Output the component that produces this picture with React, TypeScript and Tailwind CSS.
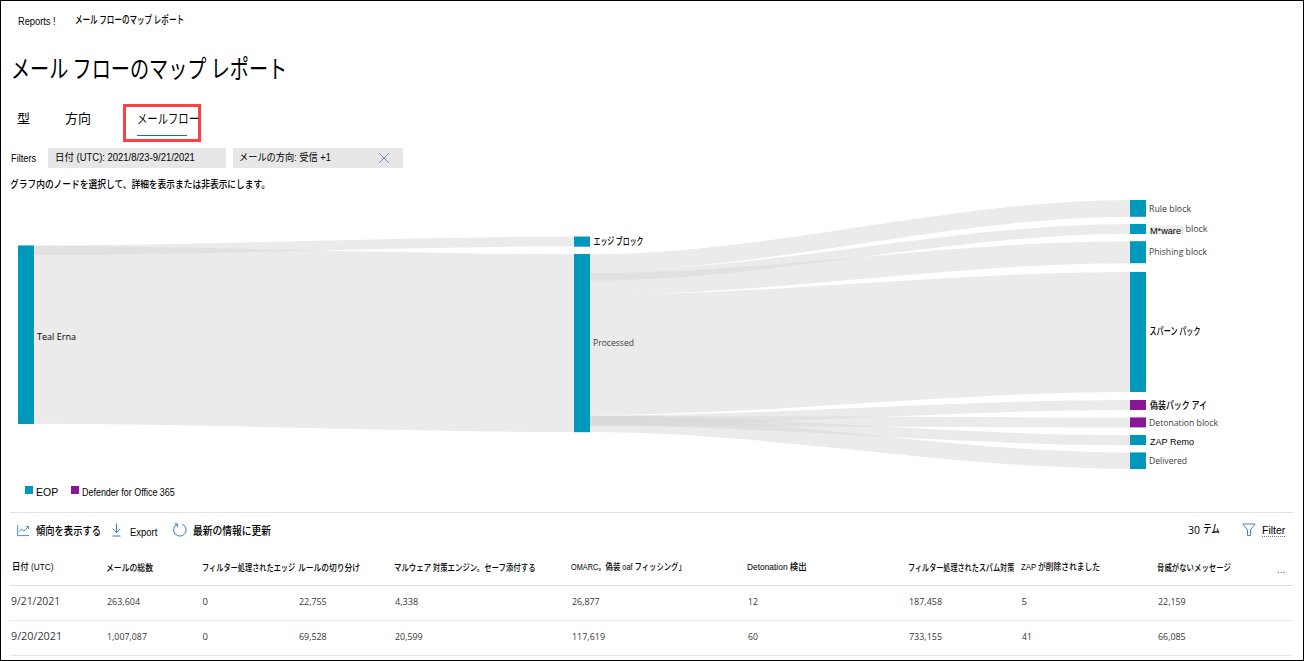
import { useLayoutEffect, useRef, useState } from "react";
import type { ReactNode } from "react";

const JP = "font-['Noto_Sans_CJK_JP',sans-serif]";
const ARIAL = "font-['Liberation_Sans','Noto_Sans_CJK_JP',sans-serif]";
const UI = "font-['Open_Sans','Noto_Sans_CJK_JP',sans-serif]";

/** Single line of text condensed or widened to a fixed width. */
function FitText({ w, className = "", children }: { w: number; className?: string; children: ReactNode }) {
  const ref = useRef<HTMLSpanElement>(null);
  const [scale, setScale] = useState(1);
  useLayoutEffect(() => {
    if (ref.current) setScale(w / ref.current.offsetWidth);
  }, [w]);
  return (
    <span className={`block shrink-0 whitespace-nowrap ${className}`} style={{ width: w }}>
      <span ref={ref} className="inline-block origin-left" style={{ transform: `scaleX(${scale})` }}>
        {children}
      </span>
    </span>
  );
}

type Link = { x0: number; x1: number; s: number; t: number; h: number };
const links: Link[] = [
  { x0: 34, x1: 574, s: 245.5, t: 236.7, h: 9.8 },
  { x0: 34, x1: 574, s: 246, t: 254.2, h: 177.8 },
  { x0: 590, x1: 1130, s: 254.2, t: 200, h: 16.8 },
  { x0: 590, x1: 1130, s: 270.8, t: 224, h: 9.8 },
  { x0: 590, x1: 1130, s: 273, t: 241.2, h: 22 },
  { x0: 590, x1: 1130, s: 295, t: 272, h: 120 },
  { x0: 590, x1: 1130, s: 415.7, t: 400, h: 10 },
  { x0: 590, x1: 1130, s: 415.7, t: 417.5, h: 10 },
  { x0: 590, x1: 1130, s: 415.7, t: 435.2, h: 10 },
  { x0: 590, x1: 1130, s: 415.7, t: 452.4, h: 16.4 },
];

const ribbon = ({ x0, x1, s, t, h }: Link) => {
  const a = x0 + (x1 - x0) / 3;
  const b = x1 - (x1 - x0) / 3;
  return `M${x0} ${s}C${a} ${s} ${b} ${t} ${x1} ${t}V${t + h}C${b} ${t + h} ${a} ${s + h} ${x0} ${s + h}Z`;
};

const TEAL = "#0099bc";
const PURPLE = "#881798";
const nodes = [
  { x: 18, y: 245.4, h: 178.6, c: TEAL },
  { x: 574, y: 236.5, h: 10.2, c: TEAL },
  { x: 574, y: 254, h: 178.2, c: TEAL },
  { x: 1130, y: 200, h: 16.8, c: TEAL },
  { x: 1130, y: 224, h: 10, c: TEAL },
  { x: 1130, y: 241.2, h: 22, c: TEAL },
  { x: 1130, y: 272, h: 120, c: TEAL },
  { x: 1130, y: 400, h: 10, c: PURPLE },
  { x: 1130, y: 417.4, h: 10, c: PURPLE },
  { x: 1130, y: 435, h: 10, c: TEAL },
  { x: 1130, y: 452.4, h: 16.6, c: TEAL },
];

const gray = `${UI} text-[9.5px] fill-[#3c3c3c]`;
const jp = `${JP} text-[10.5px] font-medium fill-black`;
const arial = `${ARIAL} text-[9.5px] fill-black`;
const labels = [
  { x: 37, y: 340, w: 39, t: "Teal Erna", k: `${UI} text-[9.5px] fill-black` },
  { x: 593.5, y: 245, w: 50, t: "エッジ ブロック", k: jp },
  { x: 593, y: 346, w: 41, t: "Processed", k: gray },
  { x: 1149, y: 212, w: 42, t: "Rule block", k: gray },
  { x: 1150, y: 234, w: 31, t: "M*ware", k: arial },
  { x: 1185.5, y: 232, w: 22, t: "block", k: gray },
  { x: 1149, y: 255, w: 58, t: "Phishing block", k: gray },
  { x: 1149.5, y: 334.5, w: 51, t: "スパーン パック", k: jp },
  { x: 1150, y: 408.5, w: 57, t: "偽装パック アイ", k: jp },
  { x: 1149, y: 426, w: 69, t: "Detonation block", k: gray },
  { x: 1150, y: 445, w: 44, t: "ZAP Remo", k: arial },
  { x: 1149, y: 464, w: 38, t: "Delivered", k: gray },
];

function Sankey() {
  return (
    <svg className="block h-[280px] w-[1302px]" viewBox="1 195 1302 280">
      {links.map((l, i) => (
        <path key={i} d={ribbon(l)} fill="#d7d7d7" fillOpacity={0.5} />
      ))}
      {nodes.map((n, i) => (
        <rect key={i} x={n.x} y={n.y} width={16} height={n.h} fill={n.c} />
      ))}
      <rect x={1149} y={225.5} width={34} height={9} fill="#ececec" />
      {labels.map((l) => (
        <text key={l.t + l.y} x={l.x} y={l.y} textLength={l.w} lengthAdjust="spacingAndGlyphs" className={l.k}>
          {l.t}
        </text>
      ))}
    </svg>
  );
}

const COLS = "grid grid-cols-[94px_96px_96px_96px_177px_176px_161px_113px_136px_120px_1fr]";

const headers: { t: string; w: number; k: string }[] = [
  { t: "日付 (UTC)", w: 42, k: ARIAL },
  { t: "メールの総数", w: 47, k: JP },
  { t: "フィルター処理されたエッジ", w: 93, k: JP },
  { t: "ルールの切り分け", w: 62, k: JP },
  { t: "マルウェア 対策エンジン。セーフ添付する", w: 142, k: JP },
  { t: "OMARC。偽装 oaf フィッシング」", w: 115, k: ARIAL },
  { t: "Detonation 検出", w: 60, k: ARIAL },
  { t: "フィルター処理されたスパム対策", w: 106, k: JP },
  { t: "ZAP が削除されました", w: 79, k: ARIAL },
  { t: "脅威がないメッセージ", w: 74, k: JP },
];

const rows: { date: [string, number]; cells: [string, number][] }[] = [
  {
    date: ["9/21/2021", 49],
    cells: [["263,604", 33], ["0", 5], ["22,755", 28], ["4,338", 23], ["26,877", 28], ["12", 10], ["187,458", 33], ["5", 5], ["22,159", 28]],
  },
  {
    date: ["9/20/2021", 51],
    cells: [["1,007,087", 40], ["0", 5], ["69,528", 28], ["20,599", 28], ["117,619", 33], ["60", 10], ["733,155", 33], ["41", 10], ["66,085", 28]],
  },
];

export default function App() {
  return (
    <div className={`flex h-[661px] w-[1304px] flex-col overflow-hidden border border-black bg-white text-black ${ARIAL}`}>
      <nav className="flex h-[38px] shrink-0 items-center pl-[17px]">
        <FitText w={38} className="mt-[2px] text-[10px]">Reports !</FitText>
        <FitText w={109} className={`-mt-[2px] ml-[19px] text-[11px] font-medium ${JP}`}>メール フローのマップ レポート</FitText>
      </nav>

      <h1 className="flex h-[58px] shrink-0 items-center pl-[10px]">
        <FitText w={276} className={`-mt-px text-[25px] ${JP}`}>メール フローのマップ レポート</FitText>
      </h1>

      <div className={`flex h-[51px] shrink-0 pl-[16px] pt-[7px] text-[13px] ${JP}`}>
        <FitText w={13} className="mt-[4px]">型</FitText>
        <FitText w={26} className="ml-[35px] mt-[4px]">方向</FitText>
        <div className="ml-[32px] flex h-[38px] w-[78px] flex-col border-3 border-[#fb4144] pl-[11px] pt-[1px]">
          <FitText w={62} className="h-[27px]">メールフロー</FitText>
          <div className="h-px w-[50px] bg-[#0f6cbd]" />
        </div>
      </div>

      <div className="flex h-[20px] shrink-0 pl-[10px]">
        <FitText w={25} className="mt-[3px] text-[10px]">Filters</FitText>
        <div className="ml-[12px] flex w-[178px] items-center bg-[#e7e7e7] pl-[7px] pb-[2px]">
          <FitText w={140} className="text-[10px]">日付 (UTC): 2021/8/23-9/21/2021</FitText>
        </div>
        <div className="ml-[7px] flex w-[170px] items-center bg-[#e7e7e7] pl-[6px]">
          <FitText w={92} className="mb-[2px] text-[10px]">メールの方向: 受信 +1</FitText>
          <svg className="ml-[48px] size-[10px]" viewBox="0 0 10 10" fill="none" stroke="#6f86c6">
            <path d="M.2.2l9.6 9.6M9.8.2L.2 9.8" />
          </svg>
        </div>
      </div>

      <div className="flex h-[27px] shrink-0 pl-[9px] pt-[8px]">
        <FitText w={260} className={`text-[10.5px] leading-[16px] font-medium ${JP}`}>グラフ内のノードを選択して、詳細を表示または非表示にします。</FitText>
      </div>

      <div className="h-[280px] shrink-0">
        <Sankey />
      </div>

      <div className="flex h-[37px] shrink-0 items-start pl-[24px] pt-[11px]">
        <div className="size-[8px] bg-[#0099bc]" />
        <FitText w={22} className="ml-[3px] -mt-px text-[10.5px] leading-[15px]">EOP</FitText>
        <div className="ml-[13px] size-[8px] bg-[#881798]" />
        <FitText w={93} className="ml-[3px] text-[10px] leading-[14px]">Defender for Office 365</FitText>
      </div>

      <div className="ml-[9px] mr-[10px] flex h-[38px] shrink-0 items-center border-t border-[#e1e1e1] pb-[3px]">
        <svg className="ml-[7px] size-[13px]" viewBox="0 0 13 13" fill="none" stroke="#3f7fcb" strokeWidth="0.9">
          <path d="M.7 1v10.6H12M2.2 7.6l2.4-2.5 2.3 2 4.3-4.2M9 2.5h2.5V5" />
        </svg>
        <FitText w={65} className={`ml-[6px] mt-px text-[11px] font-medium ${JP}`}>傾向を表示する</FitText>
        <svg className="ml-[11px] h-[14px] w-[9px]" viewBox="0 0 9 14" fill="none" stroke="#2f78c8">
          <path d="M4.5.5v9M.8 6l3.7 3.7L8.2 6M.5 13h8" />
        </svg>
        <FitText w={27} className="ml-[9px] mt-[5px] text-[10.5px]">Export</FitText>
        <svg className="ml-[16px] size-[14px]" viewBox="0 0 14 14" fill="none" stroke="#2f78c8">
          <path d="M9.3 1.2A6.2 6.2 0 1 1 4 1.4M1.5.8l3 .3-.2 3" />
        </svg>
        <FitText w={78} className={`ml-[6px] mt-px text-[11px] font-medium ${JP}`}>最新の情報に更新</FitText>
        <div className="ml-auto flex items-center pr-[8px]">
          <FitText w={12} className={`mt-px text-[10.5px] ${UI}`}>30</FitText>
          <FitText w={17} className={`ml-[3px] mb-[3px] text-[11px] font-medium ${JP}`}>テム</FitText>
          <svg className="ml-[22px] size-[14px]" viewBox="0 0 14 14" fill="none" stroke="#3f7fcb">
            <path d="M.8 1h12.4L8.5 6.8v5.7h-3V6.8z" />
          </svg>
          <FitText w={23} className="ml-[6px] border-b border-dotted border-[#777] text-[10.5px] leading-[12px]">Filter</FitText>
        </div>
      </div>

      <div className={`ml-[9px] mr-[10px] h-[36px] shrink-0 items-center border-b border-[#e1e1e1] pl-[2px] text-[9.5px] font-medium ${COLS}`}>
        {headers.map((h) => (
          <FitText key={h.t} w={h.w} className={h.k}>{h.t}</FitText>
        ))}
        <span className="mt-[3px] text-[10px] text-[#555]">...</span>
      </div>
      {rows.map((r) => (
        <div key={r.date[0]} className={`ml-[9px] mr-[10px] h-[35px] shrink-0 items-center border-b border-[#e8e8e8] pl-[2px] text-[9.5px] text-[#363636] ${UI} ${COLS}`}>
          <FitText w={r.date[1]} className="-ml-px pb-[3px] text-[11px]">{r.date[0]}</FitText>
          {r.cells.map(([t, w], i) => (
            <FitText key={i} w={w} className="pb-px pl-[0.5px]">{t}</FitText>
          ))}
        </div>
      ))}
    </div>
  );
}
